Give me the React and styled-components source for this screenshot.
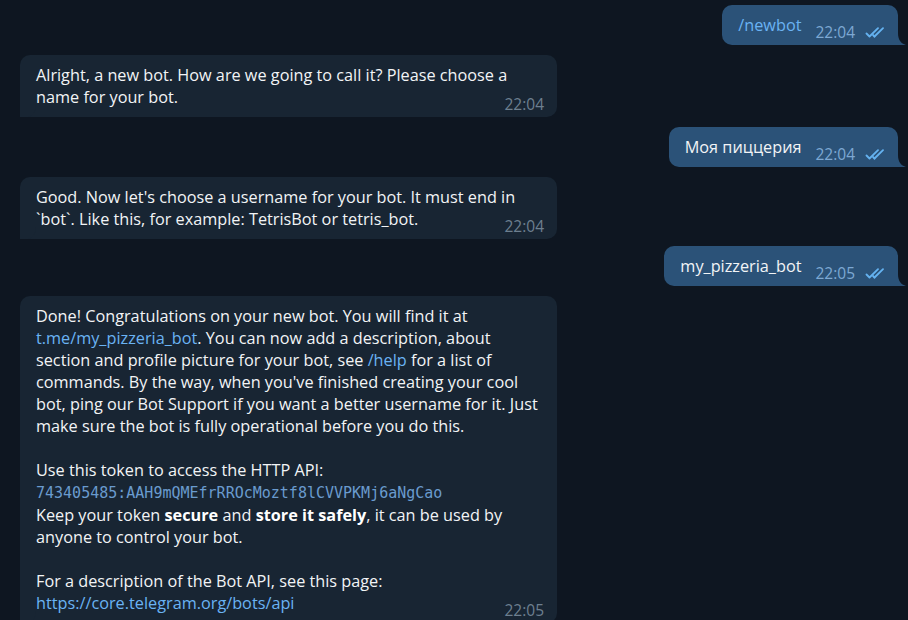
import React from 'react'
import styled, { createGlobalStyle } from 'styled-components'

const GlobalStyle = createGlobalStyle`
  html, body {
    margin: 0;
    padding: 0;
    background: #0e1621;
    height: 620px;
    overflow: hidden;
  }
  body {
    font-family: "Open Sans", "Noto Sans", sans-serif;
    -webkit-font-smoothing: antialiased;
  }
`

const Chat = styled.div`
  display: flex;
  flex-direction: column;
  gap: 10px;
  padding: 5px 10px 0 20px;
  height: 620px;
  box-sizing: border-box;
`

const Row = styled.div`
  display: flex;
  justify-content: ${props => (props.$out ? 'flex-end' : 'flex-start')};
  margin-top: ${props => (props.$tight ? '-3px' : '0')};
`

const Bubble = styled.div`
  position: relative;
  display: ${props => (props.$out ? 'flex' : 'grid')};
  align-items: flex-end;
  box-sizing: border-box;
  width: ${props => (props.$out ? 'auto' : '537px')};
  padding: ${props => (props.$out ? '9px 10px 9px 16px' : '9px 13px 9px 16px')};
  background: ${props => (props.$out ? '#2b5278' : '#182533')};
  border-radius: ${props => (props.$out ? '10px 10px 0 10px' : '10px 10px 10px 0')};
  color: #f2f4f6;

  & > * {
    grid-area: 1 / 1;
  }
`

const Text = styled.div`
  font-size: 16.25px;
  line-height: 22px;
  white-space: nowrap;
  color: ${props => props.color || '#f2f4f6'};
`

const Meta = styled.div`
  display: flex;
  align-items: center;
  gap: 10px;
  justify-self: end;
  align-self: end;
  margin-left: auto;
  padding-left: 14px;
  margin-bottom: -5px;
  font-size: 15.5px;
  line-height: 18px;
  color: ${props => (props.$out ? '#7da8d3' : '#6d7f8f')};
`

const Link = styled.span`
  color: #6ab3f3;
`

const Code = styled.span`
  font-family: "DejaVu Sans Mono", "Liberation Mono", monospace;
  font-size: 15px;
  color: #6a9bce;
`

const Bold = styled.b`
  font-weight: 700;
  color: #ffffff;
`

const TailSvg = styled.svg`
  position: absolute;
  bottom: 0;
  ${props => (props.$out ? 'right: -8px;' : 'left: -8px;')}
`

const Tail = ({ out }) => (
  <TailSvg $out={out} width="8" height="12" viewBox="0 0 8 12">
    <path
      d={out ? 'M0 0 C0 7 3 10.5 8 12 L0 12 Z' : 'M8 0 C8 7 5 10.5 0 12 L8 12 Z'}
      fill={out ? '#2b5278' : '#182533'}
    />
  </TailSvg>
)

const Checks = () => (
  <svg width="23" height="11" viewBox="0 0 23 11">
    <g fill="none" stroke="#64b2f0" strokeWidth="1.8" strokeLinecap="round" strokeLinejoin="round">
      <path d="M1.5 6.5 L4.5 9.5 L13 1.2" />
      <path d="M9.5 9.5 L18 1.2" />
      <path d="M8 8 L9.5 9.5" />
    </g>
  </svg>
)

const Outgoing = ({ children, time, color, tight }) => (
  <Row $out $tight={tight}>
    <Bubble $out>
      <Text color={color}>{children}</Text>
      <Meta $out>
        <span>{time}</span>
        <Checks />
      </Meta>
      <Tail out />
    </Bubble>
  </Row>
)

const Incoming = ({ children, time }) => (
  <Row>
    <Bubble>
      <Text>{children}</Text>
      <Meta>
        <span>{time}</span>
      </Meta>
      <Tail />
    </Bubble>
  </Row>
)

export default function App() {
  return (
    <>
      <GlobalStyle />
      <Chat>
        <Outgoing time="22:04" color="#6ab3f3">/newbot</Outgoing>
        <Incoming time="22:04">
          Alright, a new bot. How are we going to call it? Please choose a<br />
          name for your bot.
        </Incoming>
        <Outgoing time="22:04">Моя пиццерия</Outgoing>
        <Incoming time="22:04">
          Good. Now let's choose a username for your bot. It must end in<br />
          `bot`. Like this, for example: TetrisBot or tetris_bot.
        </Incoming>
        <Outgoing time="22:05" tight>my_pizzeria_bot</Outgoing>
        <Incoming time="22:05">
          Done! Congratulations on your new bot. You will find it at<br />
          <Link>t.me/my_pizzeria_bot</Link>. You can now add a description, about<br />
          section and profile picture for your bot, see <Link>/help</Link> for a list of<br />
          commands. By the way, when you've finished creating your cool<br />
          bot, ping our Bot Support if you want a better username for it. Just<br />
          make sure the bot is fully operational before you do this.<br />
          <br />
          Use this token to access the HTTP API:<br />
          <Code>743405485:AAH9mQMEfrRROcMoztf8lCVVPKMj6aNgCao</Code><br />
          Keep your token <Bold>secure</Bold> and <Bold>store it safely</Bold>, it can be used by<br />
          anyone to control your bot.<br />
          <br />
          For a description of the Bot API, see this page:<br />
          <Link>https://core.telegram.org/bots/api</Link>
        </Incoming>
      </Chat>
    </>
  )
}
